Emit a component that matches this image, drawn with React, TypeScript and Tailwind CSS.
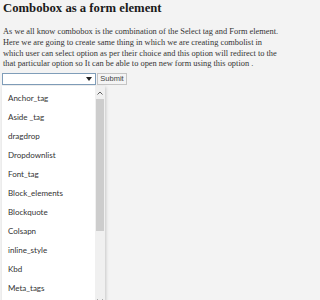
import React from "react";

const options = [
  "Anchor_tag",
  "Aside _tag",
  "dragdrop",
  "Dropdownlist",
  "Font_tag",
  "Block_elements",
  "Blockquote",
  "Colsapn",
  "inline_style",
  "Kbd",
  "Meta_tags",
];

export default function App() {
  return (
    <div className="min-h-[300px] bg-[#f3f3f3]">
      <div className="w-[283px] px-[3px] pt-[1px] font-['Liberation_Serif',serif] text-[#222]">
        {/* Heading */}
        <h1 className="text-[12.7px] font-bold leading-[15px] text-[#1a1a1a]">Combobox as a form element</h1>

        {/* Intro */}
        <p className="mt-[11px] text-[8.4px] leading-[10.8px] text-[#333]">
          As we all know combobox is the combination of the Select tag and Form element. Here we are going to create same thing in which we are creating combolist in which user can select option as per their choice and this option will redirect to the that particular option so It can be able to open new form using this option .
        </p>

        {/* Form */}
        <div className="mt-[3px] -ml-[1px] flex items-center gap-[1px]">
          <div className="relative">
            <div className="flex h-[12px] w-[94px] items-center justify-end border border-[#7f9db9] bg-white pr-[3px]">
              <svg width="6" height="4" viewBox="0 0 6 4">
                <path d="M0 0h6L3 4z" fill="#222" />
              </svg>
            </div>

            {/* Open list */}
            <div className="absolute left-0 top-[13px] z-10 flex h-[220px] w-[103px] overflow-hidden bg-white shadow-[1px_1px_3px_rgba(0,0,0,0.18)]">
              <ul className="flex-1 pl-[6px] pt-[3px] font-['Lato',sans-serif] text-[8px] text-[#333]">
                {options.map((o) => (
                  <li key={o} className="h-[19px] leading-[19px]">
                    {o}
                  </li>
                ))}
              </ul>
              <div className="flex w-[10px] flex-col items-center bg-[#f0f0f0]">
                <svg width="6" height="4" viewBox="0 0 6 4" className="mt-[5px]">
                  <path d="M0.5 3.5L3 1l2.5 2.5" stroke="#606060" strokeWidth="1" fill="none" />
                </svg>
                <div className="mt-[4px] h-[132px] w-[8px] bg-[#cdcdcd]" />
                <div className="flex-1" />
                <svg width="6" height="4" viewBox="0 0 6 4" className="mb-[3px]">
                  <path d="M0.5 0.5L3 3l2.5-2.5" stroke="#606060" strokeWidth="1" fill="none" />
                </svg>
              </div>
            </div>
          </div>

          <button className="h-[12px] w-[30px] border border-[#c4c4c4] bg-[#f4f4f4] font-['Liberation_Sans',sans-serif] text-[7.5px] leading-[10px] text-[#444]">
            Submit
          </button>
        </div>
      </div>
    </div>
  );
}
